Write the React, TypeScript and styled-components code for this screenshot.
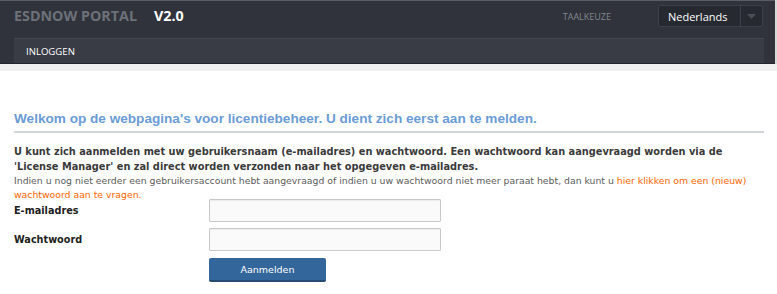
import React from "react";
import styled, { createGlobalStyle } from "styled-components";

const Global = createGlobalStyle`
  html, body { margin: 0; padding: 0; background: #ffffff; }
  body { font-family: "DejaVu Sans", Verdana, sans-serif; }
`;

const Page = styled.div`
  width: 777px;
  display: flex;
  flex-direction: column;
`;

const HeaderWrap = styled.div`
  display: flex;
  background: #d9d9d9;
`;

const Header = styled.header`
  width: 775px;
  height: 64px;
  background: #30333b;
  border-top: 1px solid #5a5d63;
  border-bottom: 1px solid #23252b;
  box-sizing: border-box;
  display: flex;
  flex-direction: column;
  padding-left: 14px;
`;

const TopRow = styled.div`
  height: 37px;
  display: flex;
  align-items: flex-start;
  padding-right: 12px;
`;

const Brand = styled.div`
  font-family: "Open Sans", sans-serif;
  font-weight: 700;
  font-size: 14.3px;
  color: #6c7179;
  margin-top: 5px;
`;

const Version = styled.span`
  color: #ffffff;
  margin-left: 17px;
`;

const Spacer = styled.div`
  flex: 1;
`;

const LangLabel = styled.div`
  font-family: "Open Sans", sans-serif;
  font-size: 9px;
  color: #83878e;
  margin-top: 9px;
  margin-right: 47px;
`;

const Select = styled.div`
  width: 105px;
  height: 22px;
  margin-top: 4px;
  box-sizing: border-box;
  background: #262930;
  border: 1px solid #3d4048;
  border-radius: 2px;
  display: flex;
  align-items: stretch;
`;

const SelectText = styled.div`
  flex: 1;
  font-family: "Open Sans", sans-serif;
  font-size: 11px;
  color: #ffffff;
  padding-left: 9px;
  display: flex;
  align-items: center;
`;

const SelectArrow = styled.div`
  width: 21px;
  border-left: 1px solid #3d4048;
  display: flex;
  align-items: center;
  justify-content: center;
`;

const Nav = styled.nav`
  width: 750px;
  height: 25px;
  background: #393c45;
  border-top: 1px solid #42464f;
  box-sizing: border-box;
  display: flex;
  align-items: center;
  padding-left: 12px;
`;

const NavItem = styled.span`
  font-family: "Open Sans", sans-serif;
  font-size: 9.6px;
  color: #ffffff;
`;

const Band = styled.div`
  height: 7px;
  background: #f0f0f0;
`;

const Content = styled.main`
  padding: 40px 14px 0 14px;
  width: 750px;
`;

const Title = styled.h1`
  margin: 0;
  font-family: "Liberation Sans", Arial, sans-serif;
  font-weight: 700;
  font-size: 13.6px;
  color: #6b9cd6;
  padding-bottom: 5px;
  border-bottom: 2px solid #d2d5da;
`;

const Intro = styled.p`
  margin: 11px 0 0 0;
  font-size: 9.8px;
  line-height: 15px;
  font-weight: 700;
  color: #3a3a3a;
  white-space: nowrap;
`;

const Note = styled.p`
  margin: 0;
  font-size: 9.3px;
  line-height: 14px;
  color: #5c5c5c;
`;

const Link = styled.a`
  color: #ff6600;
  text-decoration: none;
`;

const Form = styled.form`
  margin-top: -3px;
  display: grid;
  grid-template-columns: 195px 232px;
  row-gap: 6px;
  align-items: center;
`;

const Label = styled.label`
  font-size: 9.7px;
  font-weight: 700;
  color: #222;
  align-self: center;
`;

const Input = styled.input`
  width: 232px;
  height: 23px;
  box-sizing: border-box;
  border: 1px solid #c8c8c8;
  border-radius: 1px;
  background: #fafafa;
  box-shadow: inset 0 1px 1px rgba(0, 0, 0, 0.06);
  outline: none;
`;

const Button = styled.button`
  grid-column: 2;
  margin-top: 1px;
  width: 117px;
  height: 24px;
  background: #33669a;
  border: none;
  border-bottom: 2px solid #264c74;
  border-radius: 2px;
  color: #ffffff;
  font-family: "DejaVu Sans", Verdana, sans-serif;
  font-size: 9.5px;
  cursor: pointer;
`;

export default function App() {
  return (
    <Page>
      <Global />
      <HeaderWrap>
        <Header>
          <TopRow>
            <Brand>
              ESDNOW PORTAL<Version>V2.0</Version>
            </Brand>
            <Spacer />
            <LangLabel>TAALKEUZE</LangLabel>
            <Select>
              <SelectText>Nederlands</SelectText>
              <SelectArrow>
                <svg width="9" height="5" viewBox="0 0 9 5">
                  <path d="M0 0 L9 0 L4.5 5 Z" fill="#4a4e57" />
                </svg>
              </SelectArrow>
            </Select>
          </TopRow>
          <Nav>
            <NavItem>INLOGGEN</NavItem>
          </Nav>
        </Header>
      </HeaderWrap>
      <Band />
      <Content>
        <Title>Welkom op de webpagina's voor licentiebeheer. U dient zich eerst aan te melden.</Title>
        <Intro>
          U kunt zich aanmelden met uw gebruikersnaam (e-mailadres) en wachtwoord. Een wachtwoord kan aangevraagd worden via de
          <br />
          'License Manager' en zal direct worden verzonden naar het opgegeven e-mailadres.
        </Intro>
        <Note>
          Indien u nog niet eerder een gebruikersaccount hebt aangevraagd of indien u uw wachtwoord niet meer paraat hebt, dan kunt u{" "}
          <Link href="#">hier klikken om een (nieuw) wachtwoord aan te vragen.</Link>
        </Note>
        <Form onSubmit={(e) => e.preventDefault()}>
          <Label>E-mailadres</Label>
          <Input type="text" />
          <Label>Wachtwoord</Label>
          <Input type="password" />
          <Button type="submit">Aanmelden</Button>
        </Form>
      </Content>
    </Page>
  );
}
